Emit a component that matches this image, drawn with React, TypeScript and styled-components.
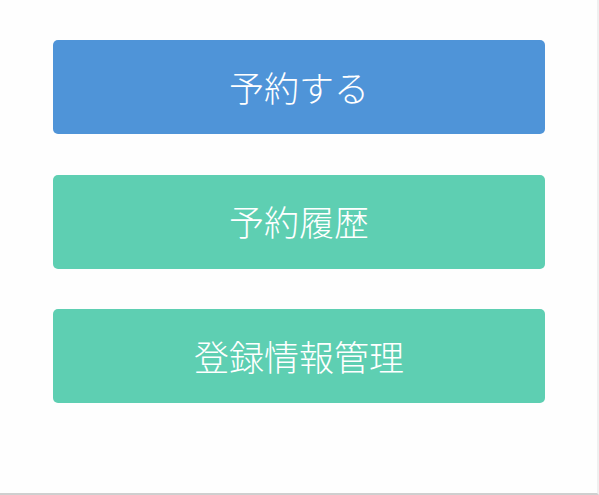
import React from 'react';
import styled, { createGlobalStyle } from 'styled-components';

const GlobalStyle = createGlobalStyle`
  html, body {
    margin: 0;
    padding: 0;
    background: #fdfdfd;
  }
`;

const Page = styled.div`
  box-sizing: border-box;
  width: 599px;
  height: 495px;
  padding: 40px 0 0 53px;
  display: flex;
  flex-direction: column;
  gap: 40.5px;
  background: #fefefe;
  border-bottom: 2px solid #cfcfcf;
  border-right: 2px solid #f0f0f0;
  font-family: "Noto Sans CJK JP", "Noto Sans", sans-serif;
`;

const MenuButton = styled.button<{ $color: string }>`
  height: 94px;
  width: 492px;
  border: none;
  border-radius: 5px;
  background: ${p => p.$color};
  color: #ffffff;
  font-family: inherit;
  font-size: 35px;
  font-weight: 300;
  display: flex;
  align-items: center;
  justify-content: center;
  padding: 0 0 2px 0;
  cursor: pointer;
`;

const items = [
  { label: '予約する', color: '#4f94d8' },
  { label: '予約履歴', color: '#5ecfb2' },
  { label: '登録情報管理', color: '#5ecfb2' },
];

const App: React.FC = () => (
  <>
    <GlobalStyle />
    <Page>
      {items.map(item => (
        <MenuButton key={item.label} $color={item.color}>
          {item.label}
        </MenuButton>
      ))}
    </Page>
  </>
);

export default App;
